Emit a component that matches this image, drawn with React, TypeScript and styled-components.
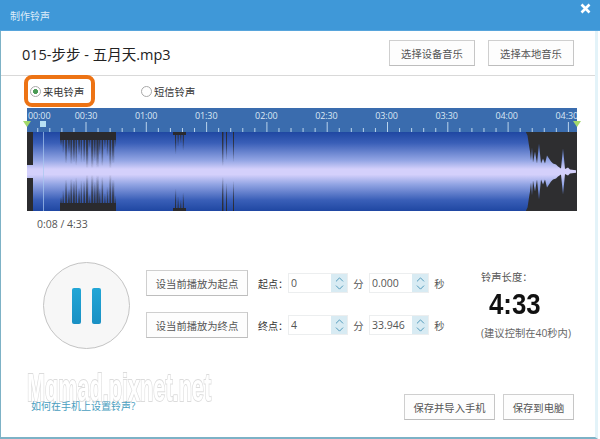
import React from 'react';
import styled, { createGlobalStyle } from 'styled-components';
import { ChevronUp, ChevronDown } from 'lucide-react';

const LABELS = ['00:00', '00:30', '01:00', '01:30', '02:00', '02:30', '03:00', '03:30', '04:00', '04:30'];

// dark gaps in the waveform: x, depth from the edge, width
const buildGaps = () => {
  const gaps: { x: number; depth: number; w: number }[] = [];
  let seed = 7;
  const rnd = () => {
    seed = (seed * 16807) % 2147483647;
    return seed / 2147483647;
  };
  for (let x = 33; x < 88; x += 2.6) {
    gaps.push({ x, depth: 14 + rnd() * 24, w: 1 + rnd() * 1.4 });
  }
  for (let x = 148; x < 158; x += 2.6) {
    if (rnd() > 0.3) gaps.push({ x, depth: 10 + rnd() * 24, w: 1.1 });
  }
  gaps.push({ x: 195, depth: 34, w: 1.4 });
  gaps.push({ x: 199, depth: 28, w: 1 });
  gaps.push({ x: 206, depth: 30, w: 1 });
  return gaps;
};

const TAIL: [number, number][] = [
  [499, 39], [500.5, 36], [502, 26], [503, 20], [504, 11], [505, 24], [506, 9], [508, 20], [510, 8],
  [512, 28], [514, 8], [516, 13], [518, 8], [520, 16], [522, 13], [524, 10], [526, 8], [529, 7],
  [531, 5], [534, 3], [536, 23], [538, 2.5], [541, 4], [543, 2], [549, 1.2], [549, 0],
];

const tailPath = () => {
  const top = TAIL.map(([x, a]) => `${x},${39.5 - a}`).join(' L');
  const bottom = [...TAIL].reverse().map(([x, a]) => `${x},${39.5 + a}`).join(' L');
  return `M${top} L${bottom} Z`;
};

const Waveform = () => (
  <WaveSvg width="550" height="79" viewBox="0 0 550 79">
    <defs>
      <linearGradient id="wave" gradientUnits="userSpaceOnUse" x1="0" y1="0" x2="0" y2="79">
        <stop offset="0" stopColor="#1f47a2" />
        <stop offset="0.14" stopColor="#3a5fb8" />
        <stop offset="0.36" stopColor="#93a5e4" />
        <stop offset="0.47" stopColor="#d4d0fb" />
        <stop offset="0.54" stopColor="#d4d0fb" />
        <stop offset="0.66" stopColor="#93a5e4" />
        <stop offset="0.86" stopColor="#3a5fb8" />
        <stop offset="1" stopColor="#1f47a2" />
      </linearGradient>
      <linearGradient id="gapTop" x1="0" y1="0" x2="0" y2="1">
        <stop offset="0" stopColor="#2b2b2e" />
        <stop offset="0.45" stopColor="#2b2b2e" stopOpacity="0.75" />
        <stop offset="1" stopColor="#2b2b2e" stopOpacity="0" />
      </linearGradient>
      <linearGradient id="gapBottom" x1="0" y1="1" x2="0" y2="0">
        <stop offset="0" stopColor="#2b2b2e" />
        <stop offset="0.45" stopColor="#2b2b2e" stopOpacity="0.75" />
        <stop offset="1" stopColor="#2b2b2e" stopOpacity="0" />
      </linearGradient>
      <filter id="soft">
        <feGaussianBlur stdDeviation="0.5" />
      </filter>
    </defs>
    <rect width="550" height="79" fill="url(#wave)" />
    <rect x="0" y="0" width="6" height="79" fill="#2b2b2e" />
    <rect x="0" y="33" width="6" height="13" fill="url(#wave)" filter="url(#soft)" />
    <g filter="url(#soft)">
      {buildGaps().map((g, i) => (
        <g key={i}>
          <rect x={g.x} y="0" width={g.w} height={g.depth} fill="url(#gapTop)" />
          <rect x={g.x} y={79 - g.depth} width={g.w} height={g.depth} fill="url(#gapBottom)" />
        </g>
      ))}
      <rect x="33" y="0" width="56" height="8" fill="#2b2b2e" />
      <rect x="33" y="71" width="56" height="8" fill="#2b2b2e" />
      <rect x="146" y="0" width="13" height="3" fill="#2b2b2e" />
      <rect x="146" y="76" width="13" height="3" fill="#2b2b2e" />
    </g>
    <rect x="499" y="0" width="51" height="79" fill="#2e2e30" />
    <path d={tailPath()} fill="url(#wave)" filter="url(#soft)" />
    <rect x="16" y="0" width="1" height="79" fill="#a8c8f0" opacity="0.7" />
  </WaveSvg>
);

const RulerTicks = () => {
  const ticks = [];
  for (let i = 0; i < 46; i++) {
    const x = 59 - 48.24 + i * 12.06;
    ticks.push(
      <line key={i} x1={x} x2={x} y1={i % 5 === 4 ? 0 : 6} y2="10" stroke="#b9d3ec" strokeWidth="1" />
    );
  }
  return (
    <TickSvg width="550" height="10" viewBox="0 0 550 10">
      {ticks}
    </TickSvg>
  );
};

const Spin = ({ value }: { value: string }) => (
  <SpinBox>
    <SpinInput readOnly value={value} />
    <SpinArrows>
      <ChevronUp size={13} strokeWidth={1.6} />
      <ChevronDown size={13} strokeWidth={1.6} />
    </SpinArrows>
  </SpinBox>
);

const CutRow = ({ button, label, min, sec }: { button: string; label: string; min: string; sec: string }) => (
  <Row>
    <Button $width={102}>{button}</Button>
    <FieldLabel>{label}</FieldLabel>
    <Spin value={min} />
    <Unit>分</Unit>
    <Spin value={sec} />
    <Unit>秒</Unit>
  </Row>
);

export default function App() {
  return (
    <>
      <GlobalStyle />
      <Win>
        <TitleBar>
          <TitleText>制作铃声</TitleText>
          <CloseIcon width="11" height="11" viewBox="0 0 11 11">
            <path d="M1.5 1.5 L9.5 9.5 M9.5 1.5 L1.5 9.5" stroke="#fff" strokeWidth="2.6" />
          </CloseIcon>
        </TitleBar>
        <Body>
          <Header>
            <FileName>015-步步 - 五月天.mp3</FileName>
            <HeaderButtons>
              <Button $width={86}>选择设备音乐</Button>
              <Button $width={86}>选择本地音乐</Button>
            </HeaderButtons>
          </Header>

          <RadioRow>
            <Highlight />
            <RadioItem $width={111}>
              <Radio $checked />
              来电铃声
            </RadioItem>
            <RadioItem>
              <Radio />
              短信铃声
            </RadioItem>
          </RadioRow>

          <Timeline>
            <Ruler>
              <RulerLabels>
                {LABELS.map((label, i) => (
                  <RulerLabel key={label} $first={i === 0}>
                    {label}
                  </RulerLabel>
                ))}
              </RulerLabels>
              <RulerTicks />
              <Marker $side="left" />
              <Marker $side="right" />
              <PlayHead />
            </Ruler>
            <Waveform />
          </Timeline>

          <TimeText>0:08 / 4:33</TimeText>

          <Controls>
            <PlayButton>
              <PauseBar />
              <PauseBar />
            </PlayButton>
            <Rows>
              <CutRow button="设当前播放为起点" label="起点：" min="0" sec="0.000" />
              <CutRow button="设当前播放为终点" label="终点：" min="4" sec="33.946" />
            </Rows>
            <LengthBox>
              <LengthLabel>铃声长度：</LengthLabel>
              <LengthValue>4:33</LengthValue>
              <LengthHint>(建议控制在40秒内)</LengthHint>
            </LengthBox>
          </Controls>

          <Footer>
            <Watermark>Mqmad.pixnet.net</Watermark>
            <HelpLink>如何在手机上设置铃声?</HelpLink>
            <FooterButtons>
              <Button $width={91}>保存并导入手机</Button>
              <Button $width={71}>保存到电脑</Button>
            </FooterButtons>
          </Footer>
        </Body>
      </Win>
    </>
  );
}

const GlobalStyle = createGlobalStyle`
  html, body {
    margin: 0;
    padding: 0;
    background: #fff;
  }
  * {
    box-sizing: border-box;
  }
`;

const FONT = `"Open Sans", "Noto Sans CJK SC", sans-serif`;

const Win = styled.div`
  width: 600px;
  height: 439px;
  display: flex;
  flex-direction: column;
  overflow: hidden;
  font-family: ${FONT};
  color: #444;
  background: #fff;
`;

const TitleBar = styled.div`
  height: 31px;
  flex: none;
  display: flex;
  align-items: center;
  justify-content: space-between;
  padding: 0 9px 0 10px;
  background: #3f98d8;
  border-bottom: 1px solid #57a5dc;
`;

const TitleText = styled.span`
  font-size: 10px;
  color: #dcecf8;
`;

const CloseIcon = styled.svg`
  display: block;
  align-self: flex-start;
  margin-top: 3px;
`;

const Body = styled.div`
  flex: 1;
  width: 598px;
  display: flex;
  flex-direction: column;
  border-left: 1px solid #7db2c6;
  border-right: 3px solid #e3f3f9;
  border-bottom: 2px solid #7db2c6;
`;

const Header = styled.div`
  height: 45px;
  flex: none;
  display: flex;
  align-items: center;
  justify-content: space-between;
  padding: 0 21px 0 21px;
  border-bottom: 1px solid #d9d9d9;
`;

const FileName = styled.div`
  font-size: 14.5px;
  color: #222;
`;

const HeaderButtons = styled.div`
  display: flex;
  gap: 13px;
`;

const Button = styled.button<{ $width: number }>`
  width: ${(p) => p.$width}px;
  height: 26px;
  flex: none;
  padding: 0;
  background: #fdfdfd;
  border: 1px solid #cfcfcf;
  border-bottom-color: #bdbdbd;
  border-right-color: #c6c6c6;
  font-family: ${FONT};
  font-size: 10.3px;
  color: #555;
`;

const RadioRow = styled.div`
  position: relative;
  height: 32px;
  flex: none;
  display: flex;
  align-items: center;
  padding: 0 0 2px 29px;
`;

const Highlight = styled.div`
  position: absolute;
  left: 23px;
  top: -1px;
  width: 71px;
  height: 32px;
  border: 4px solid #ed7314;
  border-radius: 8px;
  background: transparent;
`;

const RadioItem = styled.label<{ $width?: number }>`
  display: flex;
  align-items: center;
  gap: 2px;
  width: ${(p) => (p.$width ? `${p.$width}px` : 'auto')};
  font-size: 10.3px;
  color: #333;
`;

const Radio = styled.span<{ $checked?: boolean }>`
  width: 11px;
  height: 11px;
  flex: none;
  border-radius: 50%;
  border: 1px solid #a9a9a9;
  background: ${(p) =>
    p.$checked ? 'radial-gradient(circle, #4a9b55 0 2.2px, #fff 2.8px)' : '#fff'};
`;

const Timeline = styled.div`
  width: 550px;
  margin-left: 26px;
  flex: none;
`;

const Ruler = styled.div`
  position: relative;
  height: 24px;
  display: flex;
  flex-direction: column;
  justify-content: flex-end;
  background: #3a6cae;
`;

const RulerLabels = styled.div`
  display: flex;
  height: 14px;
  overflow: hidden;
`;

const RulerLabel = styled.span<{ $first: boolean }>`
  flex: none;
  width: ${(p) => (p.$first ? '29px' : '60.1px')};
  padding-left: ${(p) => (p.$first ? '1px' : '0')};
  text-align: ${(p) => (p.$first ? 'left' : 'center')};
  font-size: 9px;
  letter-spacing: -0.1px;
  line-height: 15px;
  white-space: nowrap;
  color: #dbe8f5;
`;

const TickSvg = styled.svg`
  display: block;
`;

const WaveSvg = styled.svg`
  display: block;
`;

const Marker = styled.div<{ $side: 'left' | 'right' }>`
  position: absolute;
  top: 13px;
  ${(p) => (p.$side === 'left' ? 'left: -4px;' : 'right: -4px;')}
  width: 0;
  height: 0;
  border-left: 4px solid transparent;
  border-right: 4px solid transparent;
  border-top: 6px solid #a3d96c;
`;

const PlayHead = styled.div`
  position: absolute;
  top: 13px;
  left: 13px;
  width: 6px;
  height: 6px;
  background: #b7e0f4;
`;

const TimeText = styled.div`
  height: 51px;
  flex: none;
  padding: 6px 0 0 36px;
  font-size: 10.5px;
  line-height: 15px;
  color: #555;
`;

const Controls = styled.div`
  height: 100px;
  flex: none;
  display: flex;
  align-items: flex-start;
  padding-left: 42px;
`;

const PlayButton = styled.div`
  width: 87px;
  height: 87px;
  flex: none;
  display: flex;
  align-items: center;
  justify-content: center;
  gap: 11px;
  border-radius: 50%;
  border: 1px solid #c4c4c4;
  background: #f7f7f7;
`;

const PauseBar = styled.div`
  width: 9px;
  height: 36px;
  border-radius: 2px;
  background: linear-gradient(#22a6d6, #1a90c4);
`;

const Rows = styled.div`
  display: flex;
  flex-direction: column;
  gap: 16px;
  margin: 8px 0 0 16px;
`;

const Row = styled.div`
  display: flex;
  align-items: center;
`;

const FieldLabel = styled.span`
  width: 30px;
  margin-left: 10px;
  font-size: 10px;
  white-space: nowrap;
  color: #333;
`;

const SpinBox = styled.div`
  width: 60px;
  height: 20px;
  flex: none;
  display: flex;
  border: 1px solid #eceeef;
`;

const SpinInput = styled.input`
  width: 42px;
  height: 100%;
  padding: 0 0 0 2px;
  border: 0;
  outline: none;
  background: #fff;
  font-family: ${FONT};
  font-size: 10.5px;
  color: #555;
`;

const SpinArrows = styled.div`
  width: 16px;
  flex: none;
  display: flex;
  flex-direction: column;
  align-items: center;
  justify-content: center;
  background: #d8ebf3;
  color: #3d8db2;

  svg {
    display: block;
    margin: -2.5px 0;
  }
`;

const Unit = styled.span`
  width: 21px;
  text-align: center;
  font-size: 10.3px;
  color: #555;
`;

const LengthBox = styled.div`
  width: 92px;
  flex: none;
  margin: 8px 0 0 31px;
  display: flex;
  flex-direction: column;
  align-items: flex-start;
`;

const LengthLabel = styled.div`
  font-size: 10.3px;
  line-height: 14px;
  color: #555;
`;

const LengthValue = styled.div`
  margin: 2px 0 0 8px;
  font-family: "Liberation Sans", sans-serif;
  font-weight: 700;
  font-size: 30px;
  line-height: 36px;
  color: #111;
  transform: scaleX(0.86);
  transform-origin: left center;
`;

const LengthHint = styled.div`
  margin-top: 4px;
  font-size: 10.3px;
  line-height: 14px;
  white-space: nowrap;
  color: #666;
`;

const Footer = styled.div`
  position: relative;
  flex: 1;
  display: flex;
  align-items: flex-start;
  justify-content: space-between;
  padding: 0 21px 0 30px;
`;

const HelpLink = styled.a`
  position: relative;
  font-size: 10px;
  line-height: 12px;
  color: #4a9ec0;
  align-self: flex-end;
  margin-bottom: 25px;
`;

const Watermark = styled.div`
  position: absolute;
  left: 26px;
  top: 14px;
  font-family: "Liberation Sans", sans-serif;
  font-weight: 700;
  font-size: 38px;
  line-height: 24px;
  color: #fff;
  -webkit-text-stroke: 2px #dcdcdc;
  paint-order: stroke fill;
  white-space: nowrap;
  transform: scaleX(0.57);
  transform-origin: left center;
`;

const FooterButtons = styled.div`
  display: flex;
  gap: 8px;
  margin-top: 32px;
`;
